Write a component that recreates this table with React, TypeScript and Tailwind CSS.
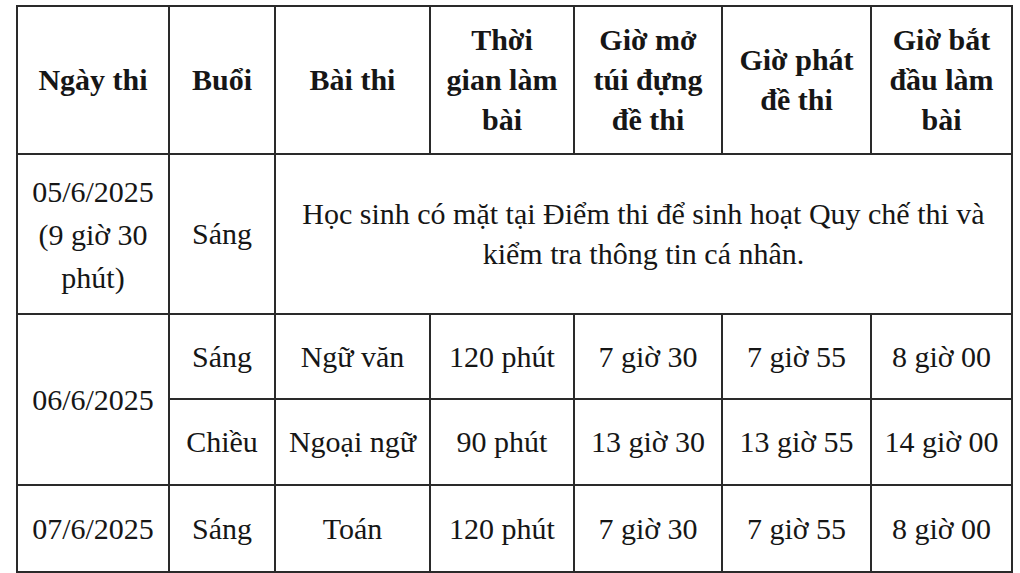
import React from "react";

const cell = "border-2 border-[#2a2a2a] text-center align-middle px-0";

const rows = [
  { subject: "Ngữ văn", time: "120 phút", open: "7 giờ 30", give: "7 giờ 55", start: "8 giờ 00" },
  { subject: "Ngoại ngữ", time: "90 phút", open: "13 giờ 30", give: "13 giờ 55", start: "14 giờ 00" },
  { subject: "Toán", time: "120 phút", open: "7 giờ 30", give: "7 giờ 55", start: "8 giờ 00" },
];

export default function App() {
  return (
    <div className="w-[1020px] h-[573px] bg-white overflow-hidden pt-[5px] pl-[16px]">
      <table
        className="table-fixed border-collapse text-[#161616] text-[30px] leading-[40px]"
        style={{ fontFamily: '"Liberation Serif", "Times New Roman", serif', width: 995 }}
      >
        <colgroup>
          <col className="w-[152px]" />
          <col className="w-[106px]" />
          <col className="w-[155px]" />
          <col className="w-[144px]" />
          <col className="w-[148px]" />
          <col className="w-[149px]" />
          <col className="w-[141px]" />
        </colgroup>
        <thead>
          <tr className="h-[148px] font-bold">
            <th className={cell}>Ngày thi</th>
            <th className={cell}>Buổi</th>
            <th className={cell}>Bài thi</th>
            <th className={cell}>
              Thời
              <br />
              gian làm
              <br />
              bài
            </th>
            <th className={cell}>
              Giờ mở
              <br />
              túi đựng
              <br />
              đề thi
            </th>
            <th className={cell}>
              Giờ phát
              <br />
              đề thi
            </th>
            <th className={cell}>
              Giờ bắt
              <br />
              đầu làm
              <br />
              bài
            </th>
          </tr>
        </thead>
        <tbody>
          <tr className="h-[160px]">
            <td className={`${cell} leading-[43px]`}>
              05/6/2025
              <br />
              (9 giờ 30
              <br />
              phút)
            </td>
            <td className={cell}>Sáng</td>
            <td className={cell} colSpan={5}>
              Học sinh có mặt tại Điểm thi để sinh hoạt Quy chế thi và
              <br />
              kiểm tra thông tin cá nhân.
            </td>
          </tr>
          <tr className="h-[85px]">
            <td className={cell} rowSpan={2}>
              06/6/2025
            </td>
            <td className={cell}>Sáng</td>
            <td className={cell}>{rows[0].subject}</td>
            <td className={cell}>{rows[0].time}</td>
            <td className={cell}>{rows[0].open}</td>
            <td className={cell}>{rows[0].give}</td>
            <td className={cell}>{rows[0].start}</td>
          </tr>
          <tr className="h-[86px]">
            <td className={cell}>Chiều</td>
            <td className={cell}>{rows[1].subject}</td>
            <td className={cell}>{rows[1].time}</td>
            <td className={cell}>{rows[1].open}</td>
            <td className={cell}>{rows[1].give}</td>
            <td className={cell}>{rows[1].start}</td>
          </tr>
          <tr className="h-[87px]">
            <td className={cell}>07/6/2025</td>
            <td className={cell}>Sáng</td>
            <td className={cell}>{rows[2].subject}</td>
            <td className={cell}>{rows[2].time}</td>
            <td className={cell}>{rows[2].open}</td>
            <td className={cell}>{rows[2].give}</td>
            <td className={cell}>{rows[2].start}</td>
          </tr>
        </tbody>
      </table>
    </div>
  );
}
